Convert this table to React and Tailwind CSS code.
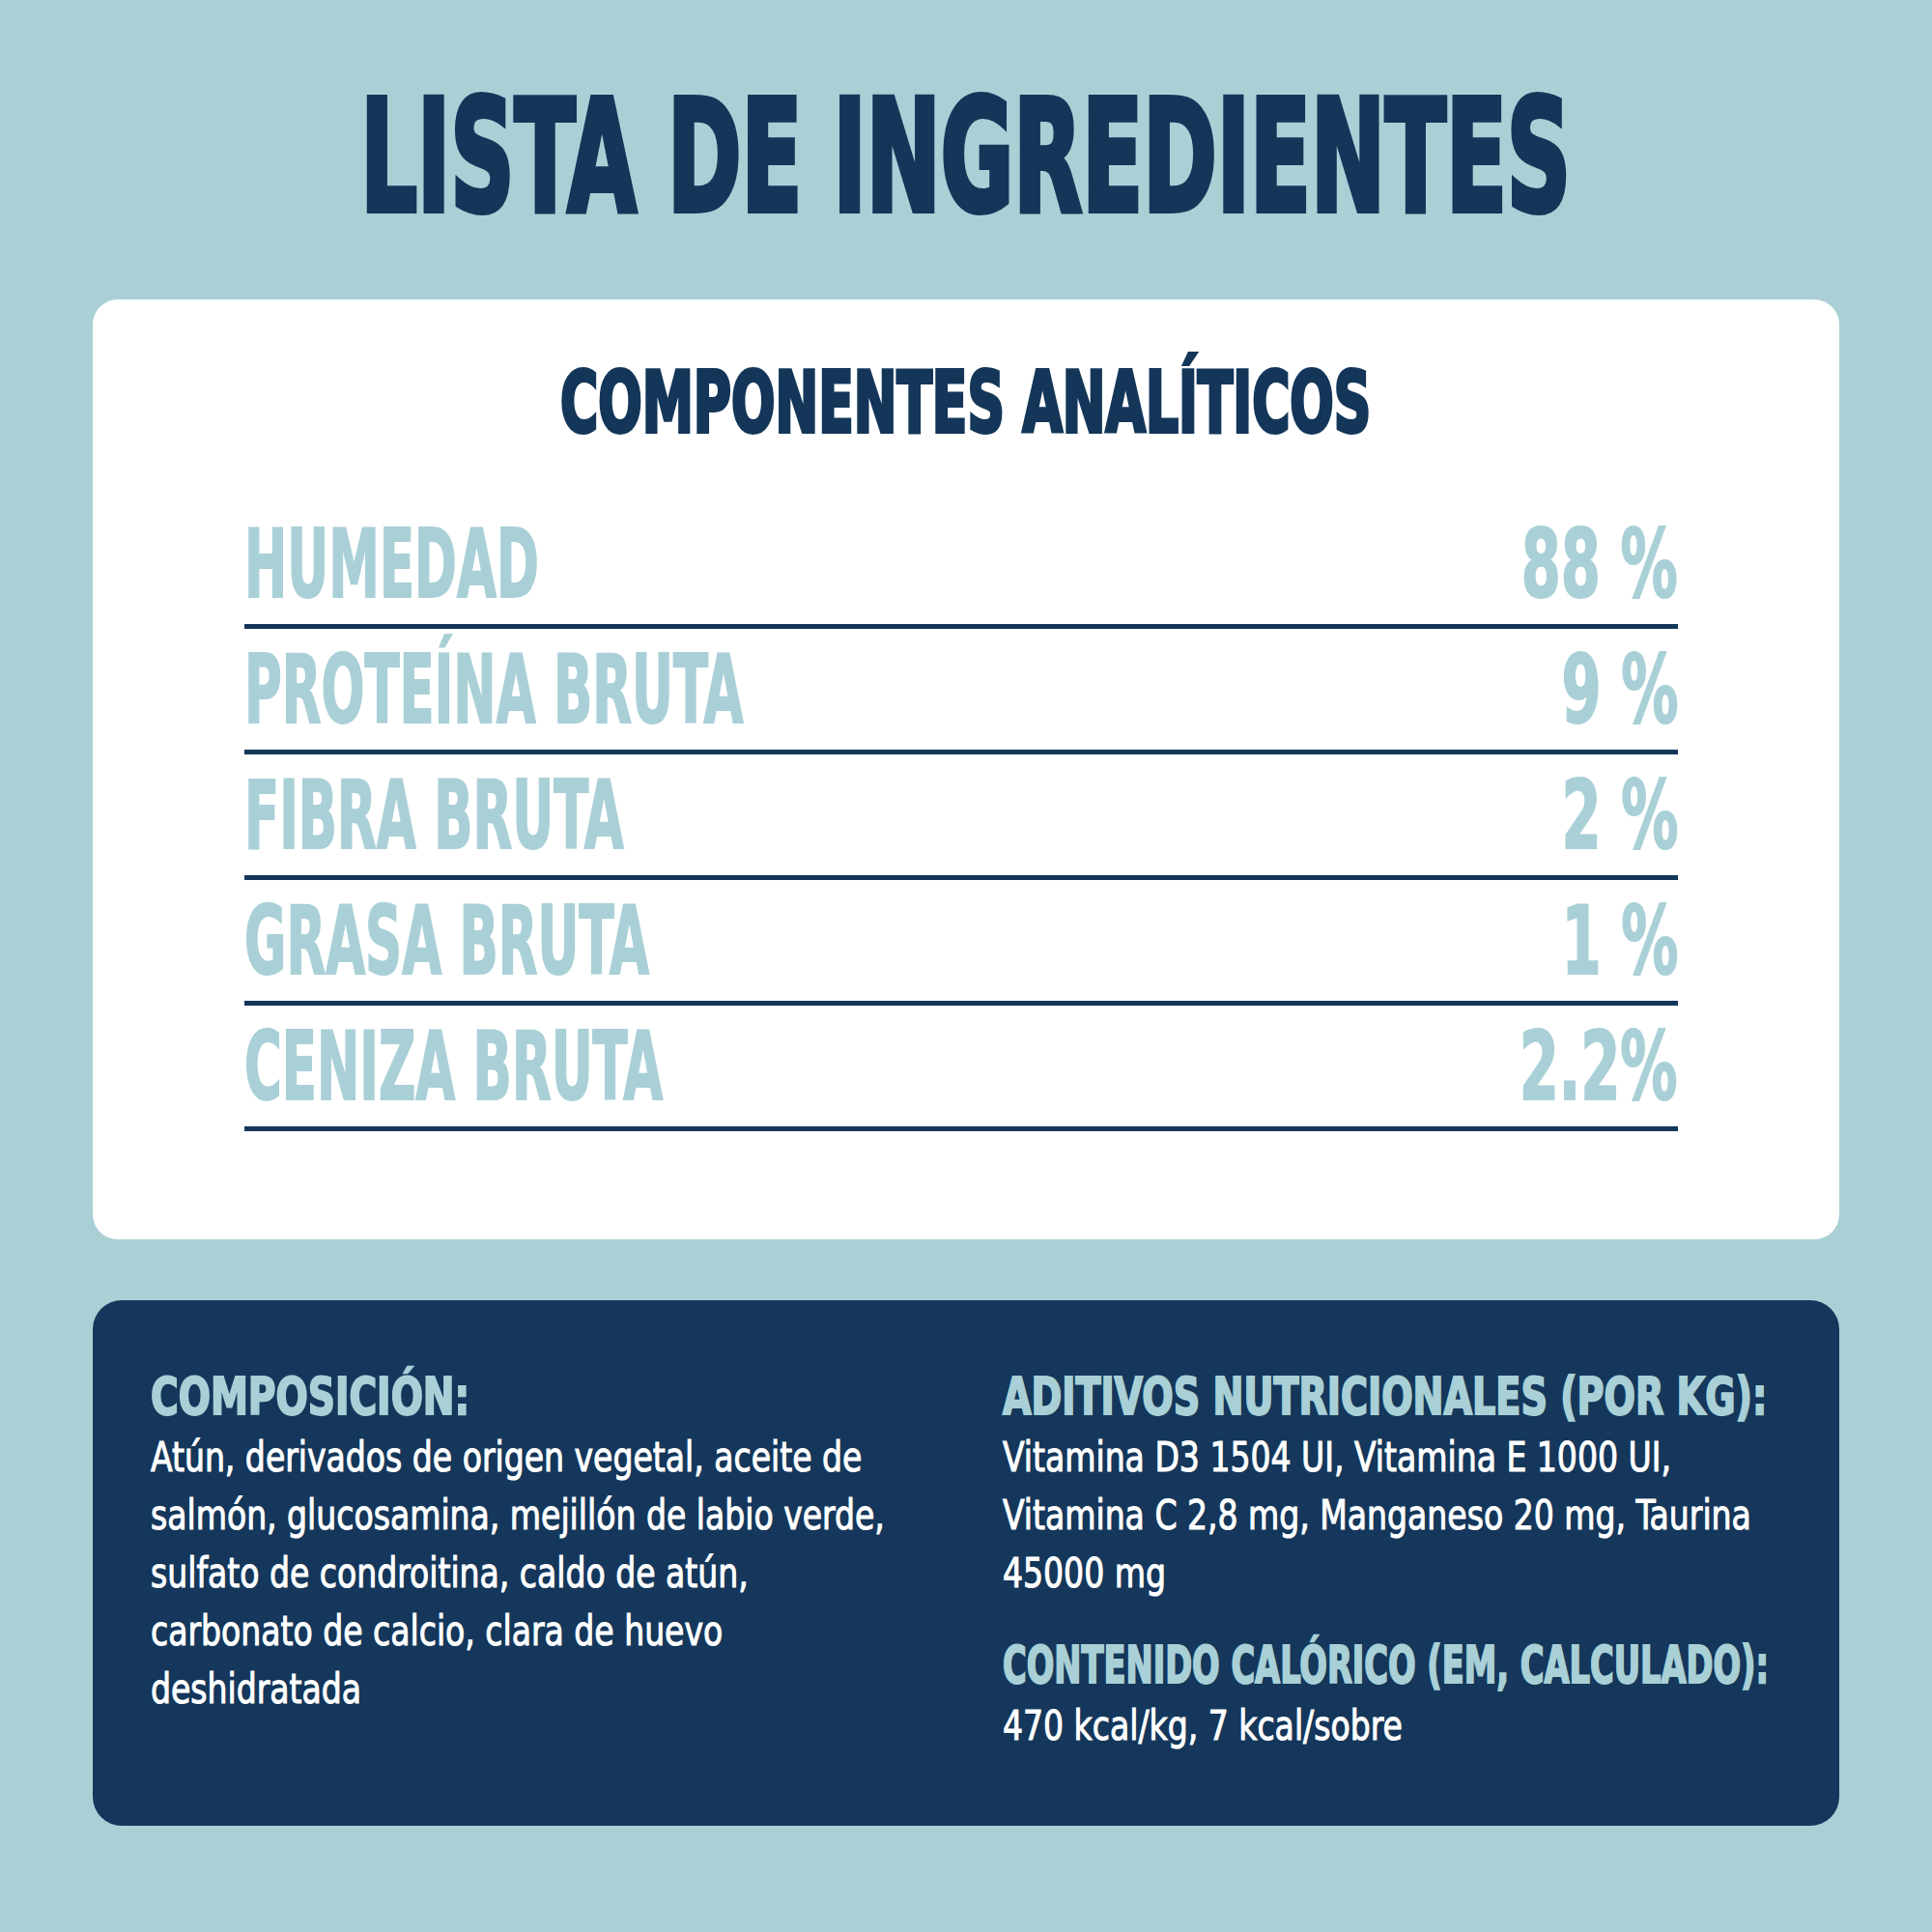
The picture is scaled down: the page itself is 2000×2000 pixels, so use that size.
const analyticRows = [
  { label: "HUMEDAD", value: "88 %" },
  { label: "PROTEÍNA BRUTA", value: "9 %" },
  { label: "FIBRA BRUTA", value: "2 %" },
  { label: "GRASA BRUTA", value: "1 %" },
  { label: "CENIZA BRUTA", value: "2.2%" },
];

const composicion = [
  "Atún, derivados de origen vegetal, aceite de",
  "salmón, glucosamina, mejillón de labio verde,",
  "sulfato de condroitina, caldo de atún,",
  "carbonato de calcio, clara de huevo",
  "deshidratada",
];

const aditivos = [
  "Vitamina D3 1504 UI, Vitamina E 1000 UI,",
  "Vitamina C 2,8 mg, Manganeso 20 mg, Taurina",
  "45000 mg",
];

const Lines = ({ lines }) => (
  <div className="pt-[4px] text-white text-[43px] leading-[60px]">
    {lines.map((line) => (
      <span key={line} className="block origin-left scale-x-[0.855] whitespace-nowrap [-webkit-text-stroke:1px_white]">
        {line}
      </span>
    ))}
  </div>
);

// each heading gets its own squeeze so the widths line up with the artwork
const Heading = ({ children, squeeze, className = "" }) => (
  <h3 className={`text-[#a9d0d6] font-bold text-[53px] leading-[56px] whitespace-nowrap ${className}`}>
    <span className={`inline-block origin-left ${squeeze} [-webkit-text-stroke:2px_#a9d0d6]`}>{children}</span>
  </h3>
);

const App = () => {
  return (
    <div className="w-[2000px] h-[2000px] overflow-hidden bg-[#aad0d6] px-24 pt-[83px] font-['Liberation_Sans_Narrow','DejaVu_Sans_Condensed',sans-serif]">
      <h1 className="flex justify-center text-[160px] leading-[160px] font-bold text-[#133659] whitespace-nowrap">
        <span className="inline-block shrink-0 scale-x-[0.64] [-webkit-text-stroke:6px_#133659]">LISTA DE INGREDIENTES</span>
      </h1>

      <div className="mt-[67px] bg-white rounded-[26px] pt-[63px] pb-[112px]">
        <h2 className="flex justify-center text-[88px] leading-[88px] font-bold text-[#133659] whitespace-nowrap">
          <span className="inline-block shrink-0 scale-x-[0.675] [-webkit-text-stroke:4px_#133659]">COMPONENTES ANALÍTICOS</span>
        </h2>

        <div className="mt-[60px] pl-[157px] pr-[167px]">
          {analyticRows.map(({ label, value }) => (
            <div
              key={label}
              className="flex items-start justify-between pt-[14px] pb-[13px] border-b-[5px] border-[#133659] text-[#a9d0d6] font-bold text-[98px] leading-[98px]"
            >
              <span className="inline-block origin-left scale-x-[0.6] whitespace-nowrap [-webkit-text-stroke:2px_#a9d0d6]">{label}</span>
              <span className="inline-block origin-right scale-x-[0.67] whitespace-nowrap [-webkit-text-stroke:2px_#a9d0d6]">{value}</span>
            </div>
          ))}
        </div>
      </div>

      <div className="mt-[63px] bg-[#14375b] rounded-[30px] px-[60px] pt-[72px] pb-[74px] grid grid-cols-2 gap-x-[75px]">
        <div>
          <Heading squeeze="scale-x-[0.82]">COMPOSICIÓN:</Heading>
          <Lines lines={composicion} />
        </div>
        <div>
          <Heading squeeze="scale-x-[0.8]">ADITIVOS NUTRICIONALES (POR KG):</Heading>
          <Lines lines={aditivos} />
          <Heading squeeze="scale-x-[0.706]" className="mt-[38px]">
            CONTENIDO CALÓRICO (EM, CALCULADO):
          </Heading>
          <Lines lines={["470 kcal/kg, 7 kcal/sobre"]} />
        </div>
      </div>
    </div>
  );
};

export default App;
